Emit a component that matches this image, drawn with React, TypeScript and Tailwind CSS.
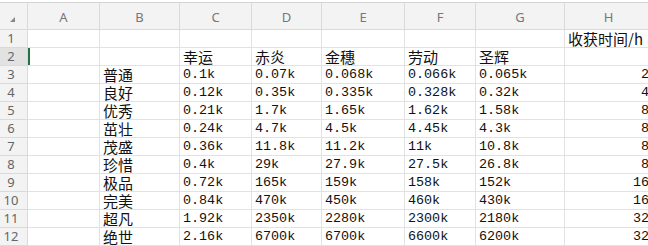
const cols = ["A", "B", "C", "D", "E", "F", "G", "H"];

const grades = ["普通", "良好", "优秀", "茁壮", "茂盛", "珍惜", "极品", "完美", "超凡", "绝世"];

const data: [string, string, string, string, string, string][] = [
  ["0.1k", "0.07k", "0.068k", "0.066k", "0.065k", "2"],
  ["0.12k", "0.35k", "0.335k", "0.328k", "0.32k", "4"],
  ["0.21k", "1.7k", "1.65k", "1.62k", "1.58k", "8"],
  ["0.24k", "4.7k", "4.5k", "4.45k", "4.3k", "8"],
  ["0.36k", "11.8k", "11.2k", "11k", "10.8k", "8"],
  ["0.4k", "29k", "27.9k", "27.5k", "26.8k", "8"],
  ["0.72k", "165k", "159k", "158k", "152k", "16"],
  ["0.84k", "470k", "450k", "460k", "430k", "16"],
  ["1.92k", "2350k", "2280k", "2300k", "2180k", "32"],
  ["2.16k", "6700k", "6700k", "6600k", "6200k", "32"],
];

const gridCols = "grid grid-cols-[28px_72px_80px_72px_70px_83px_71px_89px_88px]";
const cell = "h-[18px] border-r border-b border-[#e2e2e2] flex items-end overflow-hidden whitespace-nowrap";
const cjk = "font-['Noto_Sans_CJK_SC',sans-serif] text-[15px] leading-[16px] pl-[3px] text-[#111]";
const num = "font-['Liberation_Mono',monospace] text-[13.4px] leading-[16px] pl-[3px] text-[#111]";

function RowHead({ n, active }: { n: number; active?: boolean }) {
  return (
    <div
      className={`h-[18px] border-r border-b border-[#dadada] flex items-center justify-center pr-[5px] font-['Noto_Sans',sans-serif] text-[13px] text-[#666] ${
        active ? "bg-[#e2e2e2]" : "bg-[#f3f3f3]"
      }`}
    >
      {n}
    </div>
  );
}

export default function App() {
  return (
    <div className="w-[648px] h-[246px] overflow-hidden bg-white">
      <div className="w-[700px]">
        <div className="h-[2px] bg-white" />
        <div className={`${gridCols} h-[28px] border-t border-[#d4d4d4] bg-[#f3f3f3]`}>
          <div className="border-r border-b border-[#dadada] relative">
            <div className="absolute left-[10px] top-[14px] w-0 h-0 border-l-[5px] border-l-transparent border-b-[5px] border-b-[#888]" />
          </div>
          {cols.map((c) => (
            <div
              key={c}
              className="border-r border-b border-[#dadada] flex items-center justify-center pt-[4px] font-['Noto_Sans',sans-serif] text-[13px] text-[#777]"
            >
              {c}
            </div>
          ))}
        </div>

        {/* row 1 */}
        <div className={gridCols}>
          <RowHead n={1} />
          {cols.map((c) => (
            <div key={c} className={`${cell} ${c === "H" ? cjk : ""}`}>
              {c === "H" ? "收获时间/h" : ""}
            </div>
          ))}
        </div>

        {/* row 2 */}
        <div className={gridCols}>
          <RowHead n={2} active />
          <div className={`${cell} relative`}>
            <div className="absolute left-0 top-0 bottom-0 w-[2px] bg-[#217346]" />
          </div>
          <div className={cell} />
          {["幸运", "赤炎", "金穗", "劳动", "圣辉"].map((t) => (
            <div key={t} className={`${cell} ${cjk}`}>
              {t}
            </div>
          ))}
          <div className={cell} />
        </div>

        {grades.map((g, i) => (
          <div key={g} className={gridCols}>
            <RowHead n={i + 3} />
            <div className={cell} />
            <div className={`${cell} ${cjk}`}>{g}</div>
            {data[i].slice(0, 5).map((v, j) => (
              <div key={j} className={`${cell} ${num}`}>
                {v}
              </div>
            ))}
            <div className={`${cell} ${num} justify-end pr-[3px]`}>{data[i][5]}</div>
          </div>
        ))}
      </div>
    </div>
  );
}
